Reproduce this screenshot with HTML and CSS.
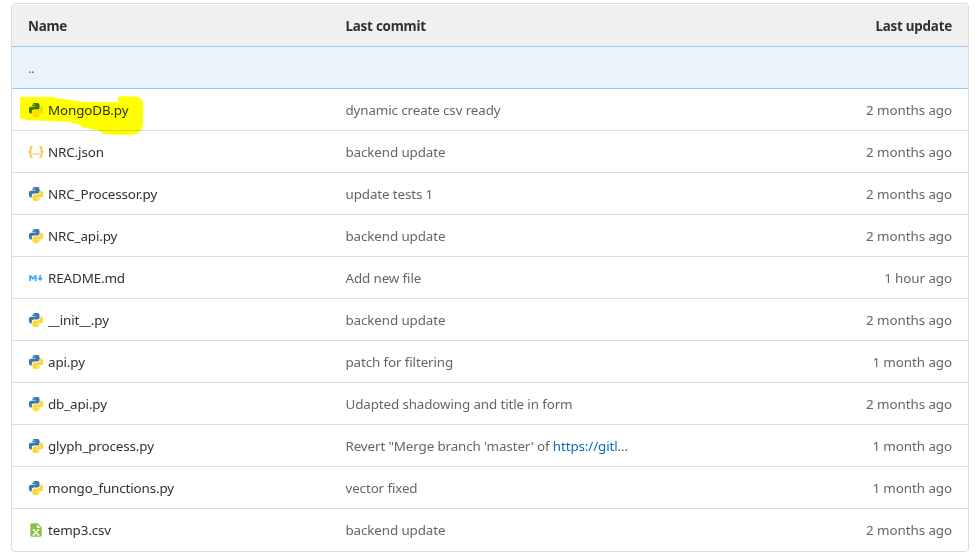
FILE: index.html
```
<!DOCTYPE html>
<html lang="en">
<head>
<meta charset="utf-8">
<title>Files</title>
<link rel="stylesheet" href="styles.css">
</head>
<body>
<svg width="0" height="0" class="defs" aria-hidden="true">
  <symbol id="python" viewBox="1.2 1.2 22.6 22.6">
    <path fill="#3c78aa" d="M9.860 2A2.860 2.860 0 0 0 7 4.860v1.680h4.290c.39 0 .71.57.71.96H4.860A2.860 2.860 0 0 0 2 10.360v3.781a2.860 2.860 0 0 0 2.860 2.860h1.180v-2.680a2.850 2.850 0 0 1 2.850-2.860h5.250c1.580 0 2.860-1.271 2.860-2.851V4.860A2.860 2.860 0 0 0 14.140 2zm-.72 1.610c.4 0 .72.12.72.71s-.32.891-.72.891c-.39 0-.71-.3-.71-.89s.32-.711.71-.711z" transform="translate(.5 .5)"/>
    <path fill="#fdd835" d="M17.959 7v2.680a2.850 2.850 0 0 1-2.850 2.859H9.860A2.850 2.850 0 0 0 7 15.389v3.750a2.860 2.860 0 0 0 2.860 2.860h4.280A2.860 2.860 0 0 0 17 19.140v-1.680h-4.291c-.39 0-.709-.57-.709-.96h7.140A2.860 2.860 0 0 0 22 13.640V9.860A2.860 2.860 0 0 0 19.140 7zM14.860 18.789c.39 0 .71.3.71.89a.71.71 0 0 1-.71.71c-.4 0-.72-.12-.72-.71s.32-.89.72-.89z" transform="translate(.5 .5)"/>
  </symbol>
  <symbol id="json" viewBox="0 0 16 16">
    <path fill="none" stroke="#fbc02d" stroke-width="1.500" d="M4.500 2.700H4Q2.700 2.700 2.700 4v2.200Q2.700 8 .5 8q2.200 0 2.200 1.800V12q0 1.300 1.300 1.300h.5M11.500 2.700h.5q1.300 0 1.300 1.300v2.200Q13.300 8 15.500 8q-2.200 0-2.200 1.800V12q0 1.300-1.300 1.300h-.5"/>
    <path fill="#fbc02d" d="M4.700 9.200h1.500v1.500H4.700zM7.250 9.200h1.500v1.500h-1.500zM9.800 9.200h1.500v1.500H9.800z"/>
  </symbol>
  <symbol id="markdown" viewBox="0 0 16 16">
    <path fill="#42a5f5" d="M1.200 10.900V5.200h1.800l1.900 2.300 1.900-2.300h1.800v5.700H6.800V7.800L4.900 10 3 7.800v3.100zM11.200 5.200h1.900v2.700H15l-2.850 3.100L9.300 7.900h1.900z"/>
  </symbol>
  <symbol id="sheet" viewBox="0 0 16 16">
    <path fill="#8bc34a" d="M3.700 1.300h6l4 4v8q0 1.400-1.400 1.400H3.700q-1.400 0-1.400-1.400V2.700q0-1.400 1.400-1.400z"/>
    <path fill="#fff" d="M9 2.400v3.700h3.700z"/>
    <path fill="none" stroke="#fff" stroke-width="1.300" d="M5.500 7.900l5 5.100M10.500 7.900l-5 5.100M4.600 7.900h2.200M9.200 7.900h2.200M4.600 13h2.200M9.200 13h2.200"/>
  </symbol>
</svg>
<main class="files">
  <div class="row head"><span>Name</span><span>Last commit</span><span class="time">Last update</span></div>
  <div class="row parent"><span class="up">..</span><span></span><span></span></div>
  <div class="row"><span class="name"><svg class="icon"><use href="#python"/></svg>MongoDB.py<svg class="marker" viewBox="20 96 124 40"><path fill="#ff0" d="M20 97H54V98L64 99L77 101L84 102H118V97L124 96L139 97L140 98L143 101V125L141 130L138 133V134L122 135L103 134L102 132L97 130L81 127V125L72 123V122L48 121L25 120V119H21L20 117Z"/></svg></span><span class="commit">dynamic create csv ready</span><span class="time">2 months ago</span></div>
  <div class="row"><span class="name"><svg class="icon"><use href="#json"/></svg>NRC.json</span><span class="commit">backend update</span><span class="time">2 months ago</span></div>
  <div class="row"><span class="name"><svg class="icon"><use href="#python"/></svg>NRC_Processor.py</span><span class="commit">update tests 1</span><span class="time">2 months ago</span></div>
  <div class="row"><span class="name"><svg class="icon"><use href="#python"/></svg>NRC_api.py</span><span class="commit">backend update</span><span class="time">2 months ago</span></div>
  <div class="row"><span class="name"><svg class="icon"><use href="#markdown"/></svg>README.md</span><span class="commit">Add new file</span><span class="time">1 hour ago</span></div>
  <div class="row"><span class="name"><svg class="icon"><use href="#python"/></svg>__init__.py</span><span class="commit">backend update</span><span class="time">2 months ago</span></div>
  <div class="row"><span class="name"><svg class="icon"><use href="#python"/></svg>api.py</span><span class="commit">patch for filtering</span><span class="time">1 month ago</span></div>
  <div class="row"><span class="name"><svg class="icon"><use href="#python"/></svg>db_api.py</span><span class="commit">Udapted shadowing and title in form</span><span class="time">2 months ago</span></div>
  <div class="row"><span class="name"><svg class="icon"><use href="#python"/></svg>glyph_process.py</span><span class="commit">Revert "Merge branch 'master' of <a class="link">https://gitl</a>...</span><span class="time">1 month ago</span></div>
  <div class="row"><span class="name"><svg class="icon"><use href="#python"/></svg>mongo_functions.py</span><span class="commit">vector fixed</span><span class="time">1 month ago</span></div>
  <div class="row"><span class="name"><svg class="icon"><use href="#sheet"/></svg>temp3.csv</span><span class="commit">backend update</span><span class="time">2 months ago</span></div>
</main>
</body>
</html>
```
FILE: styles.css
```
* { box-sizing: border-box; }
body {
  margin: 0;
  padding: 3px 7px 0 11px;
  background: #fff;
  font: 13.4px/20px "Noto Sans", sans-serif;
  letter-spacing: -0.12px;
  color: #666;
}
.defs { position: absolute; }
.files {
  border: 1px solid #dbdbdb;
  border-radius: 4px;
  width: 958px;
}
.row {
  display: grid;
  grid-template-columns: 317.5px 1fr 140px;
  align-items: center;
  height: 42px;
  padding: 1px 16px 0;
  border-bottom: 1px solid #dbdbdb;
  white-space: nowrap;
}
.row:last-child {
  padding-bottom: 1px;
  border-bottom: 0;
}
.head {
  height: 43px;
  border-top: 1px solid #fafafa;
  border-bottom-color: #9dc7f1;
  border-radius: 3px 3px 0 0;
  background: #f0f0f0;
  color: #303030;
  font-weight: 700;
  letter-spacing: -0.22px;
}
.parent {
  background: #e9f3fc;
  border-bottom-color: #9dc7f1;
}
.up { letter-spacing: -0.5px; }
.name {
  position: relative;
  display: flex;
  align-items: center;
  gap: 4px;
  color: #303030;
}
.icon { width: 16px; height: 16px; }
.marker {
  position: absolute;
  left: -8px;
  top: -4px;
  width: 124px;
  height: 40px;
  mix-blend-mode: multiply;
}
.time { text-align: right; letter-spacing: -0.08px; }
.head .time { letter-spacing: -0.22px; }
.link { color: #1068bf; }
```
